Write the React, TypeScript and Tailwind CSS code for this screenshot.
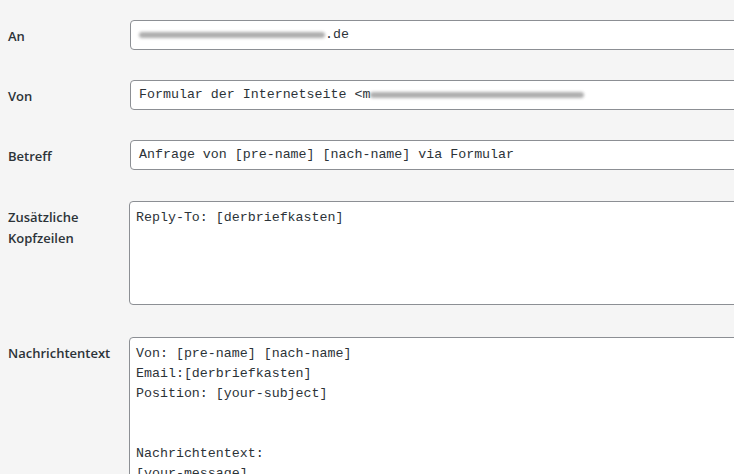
import React from 'react';

const mono = "font-['Liberation_Mono','DejaVu_Sans_Mono',monospace] text-[13.3px] text-[#2c3338]";

// smudged-out part of an address
const Smudge: React.FC<{ w: number }> = ({ w }) => (
  <span className="inline-block align-middle h-[6px] rounded-full bg-[#9a9a9a] blur-[1.5px] opacity-80" style={{ width: w }} />
);

const Row: React.FC<{ label: React.ReactNode; top: string; children: React.ReactNode }> = ({ label, top, children }) => (
  <div className={`flex items-start ${top}`}>
    <div className="w-[130px] shrink-0 pl-2 pt-[6px] text-[13px] leading-[21px] font-semibold text-[#2c3338]">{label}</div>
    {children}
  </div>
);

const Field: React.FC<{ children: React.ReactNode }> = ({ children }) => (
  <div className={`w-[640px] h-[30px] shrink-0 flex items-center bg-white border border-[#8c8f94] rounded-[4px] px-2 whitespace-pre ${mono}`}>
    {children}
  </div>
);

const Area: React.FC<{ h: string; children: React.ReactNode }> = ({ h, children }) => (
  <div className={`-ml-px w-[640px] shrink-0 ${h} bg-white border border-[#8c8f94] rounded-[4px] px-[6px] pt-[6px] leading-[20px] whitespace-pre ${mono}`}>
    {children}
  </div>
);

export default function App() {
  return (
    <div className="h-[474px] w-full overflow-hidden bg-[#f5f5f5] font-['Open_Sans','Noto_Sans',sans-serif]">
      <Row label="An" top="pt-[20px]">
        <Field>
          <Smudge w={186} />
          <span>.de</span>
        </Field>
      </Row>
      <Row label="Von" top="pt-[30px]">
        <Field>
          <span>Formular der Internetseite &lt;m</span>
          <Smudge w={214} />
        </Field>
      </Row>
      <Row label="Betreff" top="pt-[30px]">
        <Field>Anfrage von [pre-name] [nach-name] via Formular</Field>
      </Row>
      <Row label={<>Zusätzliche<br />Kopfzeilen</>} top="pt-[31px]">
        <Area h="h-[104px]">Reply-To: [derbriefkasten]</Area>
      </Row>
      <Row label="Nachrichtentext" top="pt-[32px]">
        <Area h="h-[200px]">
          {'Von: [pre-name] [nach-name]\nEmail:[derbriefkasten]\nPosition: [your-subject]\n\n\nNachrichtentext:\n[your-message]'}
        </Area>
      </Row>
    </div>
  );
}
